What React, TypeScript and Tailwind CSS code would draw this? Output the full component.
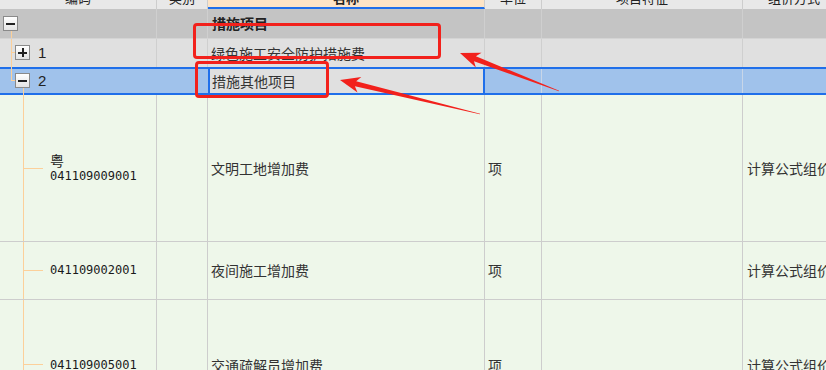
import React from "react";

const cols = ["w-[157px]", "w-[51px]", "w-[277px]", "w-[57px]", "w-[201px]", "w-[102px]"];
const line = "bg-[#fcd09a]";

function arrow(x1: number, y1: number, x2: number, y2: number) {
    // tapered arrow from tail (x1,y1) to tip (x2,y2)
    const dx = x2 - x1;
    const dy = y2 - y1;
    const len = Math.hypot(dx, dy);
    const ux = dx / len;
    const uy = dy / len;
    const nx = -uy;
    const ny = ux;
    const bx = x2 - ux * 20;
    const by = y2 - uy * 20;
    const nb = x2 - ux * 16;
    const nby = y2 - uy * 16;
    const p = (x: number, y: number) => `${x.toFixed(1)},${y.toFixed(1)}`;
    return [
        p(x1 + nx * 0.3, y1 + ny * 0.3),
        p(nb + nx * 2.6, nby + ny * 2.6),
        p(bx + nx * 8, by + ny * 8),
        p(x2, y2),
        p(bx - nx * 8, by - ny * 8),
        p(nb - nx * 2.6, nby - ny * 2.6),
        p(x1 - nx * 0.3, y1 - ny * 0.3),
    ].join(" ");
}

function TreeBox({ open }: { open: boolean }) {
    return (
        <div className="w-[15px] h-[15px] border border-[#8a8a8a] bg-gradient-to-b from-white to-[#e4e4e4] flex items-center justify-center relative">
            <div className="absolute w-[9px] h-[2px] bg-[#222]" />
            {!open && <div className="absolute w-[2px] h-[9px] bg-[#222]" />}
        </div>
    );
}

function CodeLeaf({ children, branchY }: { children: React.ReactNode; branchY: string }) {
    return (
        <div className={`${cols[0]} shrink-0 border-r border-[#cdcdcd] relative flex items-center pl-[50px]`}>
            <div className={`absolute left-[23px] top-0 bottom-0 w-px ${line}`} />
            <div className={`absolute left-[23px] w-[20px] h-px ${line} ${branchY}`} />
            <div className="font-['DejaVu_Sans_Mono',monospace] text-[12px] leading-[15px] text-[#1a1a1a]">{children}</div>
        </div>
    );
}

function DataCells({ name }: { name: string }) {
    return (
        <>
            <div className={`${cols[1]} shrink-0 border-r border-[#cdcdcd]`} />
            <div className={`${cols[2]} shrink-0 border-r border-[#cdcdcd] flex items-center pl-[3px]`}>{name}</div>
            <div className={`${cols[3]} shrink-0 border-r border-[#cdcdcd] flex items-center pl-[3px]`}>项</div>
            <div className={`${cols[4]} shrink-0 border-r border-[#cdcdcd]`} />
            <div className={`${cols[5]} shrink-0 flex items-center pl-[4px] whitespace-nowrap`}>计算公式组价</div>
        </>
    );
}

export default function App() {
    return (
        <div className="w-[826px] h-[370px] overflow-hidden relative bg-[#eef7ea] font-['Noto_Sans_CJK_SC','Noto_Sans',sans-serif] text-[14px] text-[#333]">
            <div className="w-[845px] flex flex-col">
                {/* header, scrolled so only the bottom of the labels shows */}
                <div className="h-[9px] flex bg-[#e8e8e8] overflow-hidden text-[13px] leading-[14px] text-[#222]">
                    <div className={`${cols[0]} shrink-0 border-r border-[#cdcdcd] text-center -mt-[9px]`}>编码</div>
                    <div className={`${cols[1]} shrink-0 border-r border-[#cdcdcd] text-center -mt-[9px]`}>类别</div>
                    <div className={`${cols[2]} shrink-0 border-r border-[#cdcdcd] bg-[#fde4c6] border-b-2 border-b-[#1f6fea] text-center font-bold`}>
                        <div className="-mt-[9px]">名称</div>
                    </div>
                    <div className={`${cols[3]} shrink-0 border-r border-[#cdcdcd] text-center -mt-[9px]`}>单位</div>
                    <div className={`${cols[4]} shrink-0 border-r border-[#cdcdcd] text-center -mt-[9px]`}>项目特征</div>
                    <div className={`${cols[5]} shrink-0 text-center -mt-[9px] whitespace-nowrap`}>组价方式</div>
                </div>

                {/* 措施项目 */}
                <div className="h-[29px] flex bg-[#c4c4c4]">
                    <div className={`${cols[0]} shrink-0 border-r border-[#cfcfcf] relative`}>
                        <div className="absolute left-[3px] top-[7px]"><TreeBox open /></div>
                        <div className={`absolute left-[11px] top-[22px] bottom-0 w-px ${line}`} />
                    </div>
                    <div className={`${cols[1]} shrink-0 border-r border-[#cfcfcf]`} />
                    <div className={`${cols[2]} shrink-0 border-r border-[#cfcfcf] flex items-center pl-[4px] font-bold text-[#222]`}>措施项目</div>
                    <div className={`${cols[3]} shrink-0 border-r border-[#cfcfcf]`} />
                    <div className={`${cols[4]} shrink-0 border-r border-[#cfcfcf]`} />
                    <div className={`${cols[5]} shrink-0`} />
                </div>

                {/* 1 */}
                <div className="h-[29px] flex bg-[#e0e0e0] border-t border-[#d4d4d4]">
                    <div className={`${cols[0]} shrink-0 border-r border-[#cfcfcf] relative flex items-center`}>
                        <div className={`absolute left-[11px] top-0 bottom-0 w-px ${line}`} />
                        <div className={`absolute left-[11px] top-[13px] w-[4px] h-px ${line}`} />
                        <div className="absolute left-[15px] top-[6px]"><TreeBox open={false} /></div>
                        <span className="ml-[38px] font-['Liberation_Sans',sans-serif] text-[15px] text-[#222]">1</span>
                    </div>
                    <div className={`${cols[1]} shrink-0 border-r border-[#cfcfcf]`} />
                    <div className={`${cols[2]} shrink-0 border-r border-[#cfcfcf] flex items-center pl-[3px]`}>绿色施工安全防护措施费</div>
                    <div className={`${cols[3]} shrink-0 border-r border-[#cfcfcf]`} />
                    <div className={`${cols[4]} shrink-0 border-r border-[#cfcfcf]`} />
                    <div className={`${cols[5]} shrink-0`} />
                </div>

                {/* 2, selected */}
                <div className="h-[28px] flex bg-[#a0c2eb] border-y-2 border-[#1f6fea]">
                    <div className={`${cols[0]} shrink-0 relative flex items-center`}>
                        <div className={`absolute left-[11px] -top-[2px] h-[13px] w-px ${line}`} />
                        <div className={`absolute left-[11px] top-[11px] w-[4px] h-px ${line}`} />
                        <div className="absolute left-[15px] top-[4px]"><TreeBox open /></div>
                        <div className={`absolute left-[23px] top-[19px] -bottom-[2px] w-px ${line}`} />
                        <span className="ml-[38px] font-['Liberation_Sans',sans-serif] text-[15px] text-[#222]">2</span>
                    </div>
                    <div className={`${cols[1]} shrink-0`} />
                    <div className={`${cols[2]} shrink-0 bg-[#e0e0e0] border-x-2 border-[#1f6fea] flex items-center pl-[2px]`}>措施其他项目</div>
                    <div className={`${cols[3]} shrink-0 border-r border-[#c8d6e8]`} />
                    <div className={`${cols[4]} shrink-0 border-r border-[#c8d6e8]`} />
                    <div className={`${cols[5]} shrink-0`} />
                </div>

                {/* detail rows */}
                <div className="h-[147px] flex border-b border-[#cdcdcd]">
                    <CodeLeaf branchY="top-[73px]">
                        <div className="font-['Noto_Sans_CJK_SC',sans-serif] text-[14px] leading-[17px]">粤</div>
                        <div>041109009001</div>
                    </CodeLeaf>
                    <DataCells name="文明工地增加费" />
                </div>
                <div className="h-[58px] flex border-b border-[#cdcdcd]">
                    <CodeLeaf branchY="top-[28px]">041109002001</CodeLeaf>
                    <DataCells name="夜间施工增加费" />
                </div>
                <div className="h-[130px] flex">
                    <CodeLeaf branchY="top-[64px]">041109005001</CodeLeaf>
                    <DataCells name="交通疏解员增加费" />
                </div>
            </div>

            {/* annotations */}
            <div className="absolute left-[193px] top-[23px] w-[248px] h-[36px] border-[3px] border-[#f2211c] rounded-[4px]" />
            <div className="absolute left-[195px] top-[61px] w-[134px] h-[37px] border-[3px] border-[#f2211c] rounded-[4px]" />
            <svg className="absolute inset-0" width="826" height="370" viewBox="0 0 826 370">
                <polygon points={arrow(559, 91, 460, 53)} fill="#f2211c" />
                <polygon points={arrow(480, 114, 340, 80)} fill="#f2211c" />
            </svg>
        </div>
    );
}
